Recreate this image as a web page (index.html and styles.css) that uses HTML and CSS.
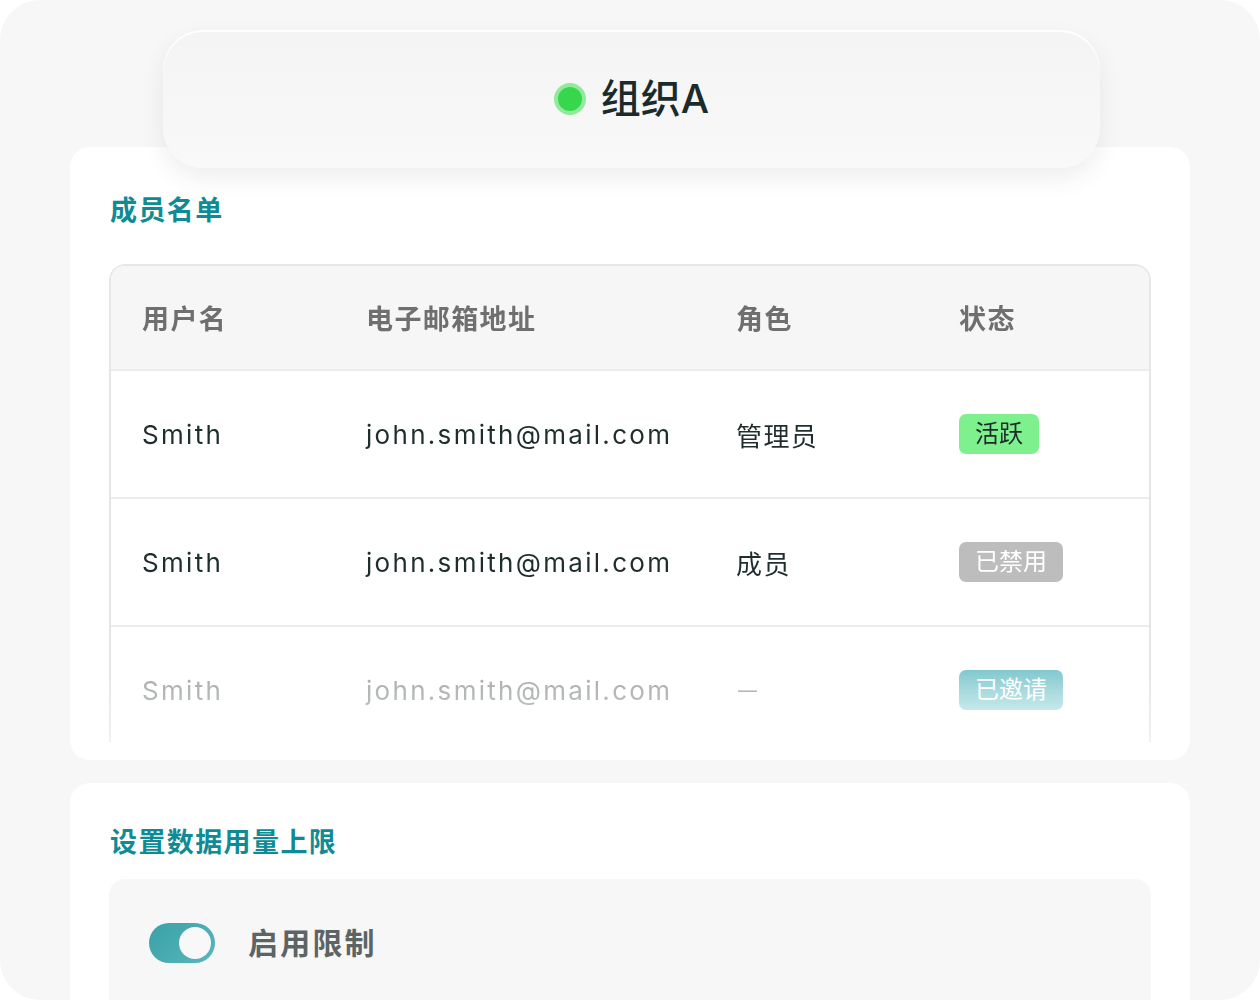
FILE: index.html
```html
<!DOCTYPE html>
<html lang="zh">
<head>
  <meta charset="UTF-8">
  <title>组织A - 成员</title>
  <link rel="stylesheet" href="styles.css">
</head>
<body>
  <div class="frame">

    <div class="org-pill">
      <span class="status-dot"></span>
      <span class="org-name">组织A</span>
    </div>

    <div class="card members">
      <h2 class="card-title">成员名单</h2>
      <div class="table-wrap">
        <div class="row head">
          <div>用户名</div>
          <div>电子邮箱地址</div>
          <div>角色</div>
          <div>状态</div>
        </div>
        <div class="row">
          <div class="latin">Smith</div>
          <div class="latin">john.smith@mail.com</div>
          <div>管理员</div>
          <div><span class="badge active">活跃</span></div>
        </div>
        <div class="row">
          <div class="latin">Smith</div>
          <div class="latin">john.smith@mail.com</div>
          <div>成员</div>
          <div><span class="badge disabled">已禁用</span></div>
        </div>
        <div class="row faded">
          <div class="latin">Smith</div>
          <div class="latin">john.smith@mail.com</div>
          <div class="dash">—</div>
          <div><span class="badge invited">已邀请</span></div>
        </div>
      </div>
    </div>

    <div class="card limits">
      <h2 class="card-title">设置数据用量上限</h2>
      <div class="limit-box">
        <span class="toggle"><span class="knob"></span></span>
        <span class="limit-label">启用限制</span>
      </div>
    </div>

  </div>
</body>
</html>
```

FILE: styles.css
```css
body { margin: 0; background: #fff; font-family: Inter, "Noto Sans CJK SC", sans-serif; }
.frame { width: 1260px; height: 1000px; background: #f7f7f7; border-radius: 40px; overflow: hidden; padding-top: 30px; box-sizing: border-box; }

.org-pill { position: relative; z-index: 2; margin-left: 163px; width: 937px; height: 138px; box-sizing: border-box; border-radius: 40px; background: linear-gradient(#f4f4f4, #f7f7f7 70%, #f9f9f9); box-shadow: 0 10px 26px rgba(0,0,0,0.07), inset 0 2px 1px #fff; display: flex; align-items: center; justify-content: center; gap: 15px; margin-bottom: -21px; }
.status-dot { width: 24px; height: 24px; border-radius: 50%; background: #36d74d; border: 4px solid #90ea9c; }
.org-name { font-size: 40px; font-weight: 500; color: #1b2a2a; line-height: 1; }

.card { background: #fff; border-radius: 20px; margin: 0 70px; padding: 49px 39px 20px; box-sizing: border-box; }
.card-title { margin: 0 0 0 1px; font-size: 27px; line-height: 30px; font-weight: 700; color: #0f8b95; letter-spacing: 1.4px; }
.members { height: 613px; }
.members .card-title { margin-bottom: 38px; }

.table-wrap { height: 476px; overflow: hidden; border: 2px solid #e6e6e6; border-bottom: 0; border-radius: 16px 16px 0 0; -webkit-mask-image: linear-gradient(#000 85%, rgba(0,0,0,0.6)); }
.row { display: grid; grid-template-columns: 224px 370px 223px auto; align-items: center; padding-left: 31px; height: 126px; border-top: 2px solid #ececec; font-size: 26px; color: #1f2d2d; letter-spacing: 1.4px; }
.row .latin { letter-spacing: 2.3px; }
.row.head { height: 103px; border-top: 0; background: #f6f6f6; font-size: 27px; font-weight: 700; color: #6f6f6f; letter-spacing: 1.4px; }
.row.faded { color: #a9adad; }
.row.faded .badge { opacity: 0.85; }
.dash { font-size: 19px; color: #a9adad; padding-left: 2px; }

.badge { display: inline-block; height: 40px; line-height: 40px; padding: 0 16px; border-radius: 7px; font-size: 24px; letter-spacing: 0; }
.badge.active { background: #7ef08d; color: #1b2a2a; }
.badge.disabled { background: #bdbdbd; color: #fff; }
.badge.invited { background: linear-gradient(#6dbec6, #a7dde0); color: #fff; }

.limits { margin-top: 23px; height: 300px; padding-top: 45px; }
.limits .card-title { margin-bottom: 21px; }
.limit-box { background: #f7f7f7; border-radius: 16px; height: 200px; padding: 44px 40px; box-sizing: border-box; display: flex; align-items: flex-start; gap: 33px; }
.toggle { display: flex; align-items: center; justify-content: flex-end; width: 66px; height: 40px; box-sizing: border-box; padding: 4px; border-radius: 20px; background: linear-gradient(135deg, #3aa0a8, #5ab7bc); }
.knob { width: 32px; height: 32px; border-radius: 50%; background: #f8f8f8; }
.limit-label { font-size: 30px; font-weight: 700; color: #5d6464; line-height: 40px; letter-spacing: 2.2px; }
```
